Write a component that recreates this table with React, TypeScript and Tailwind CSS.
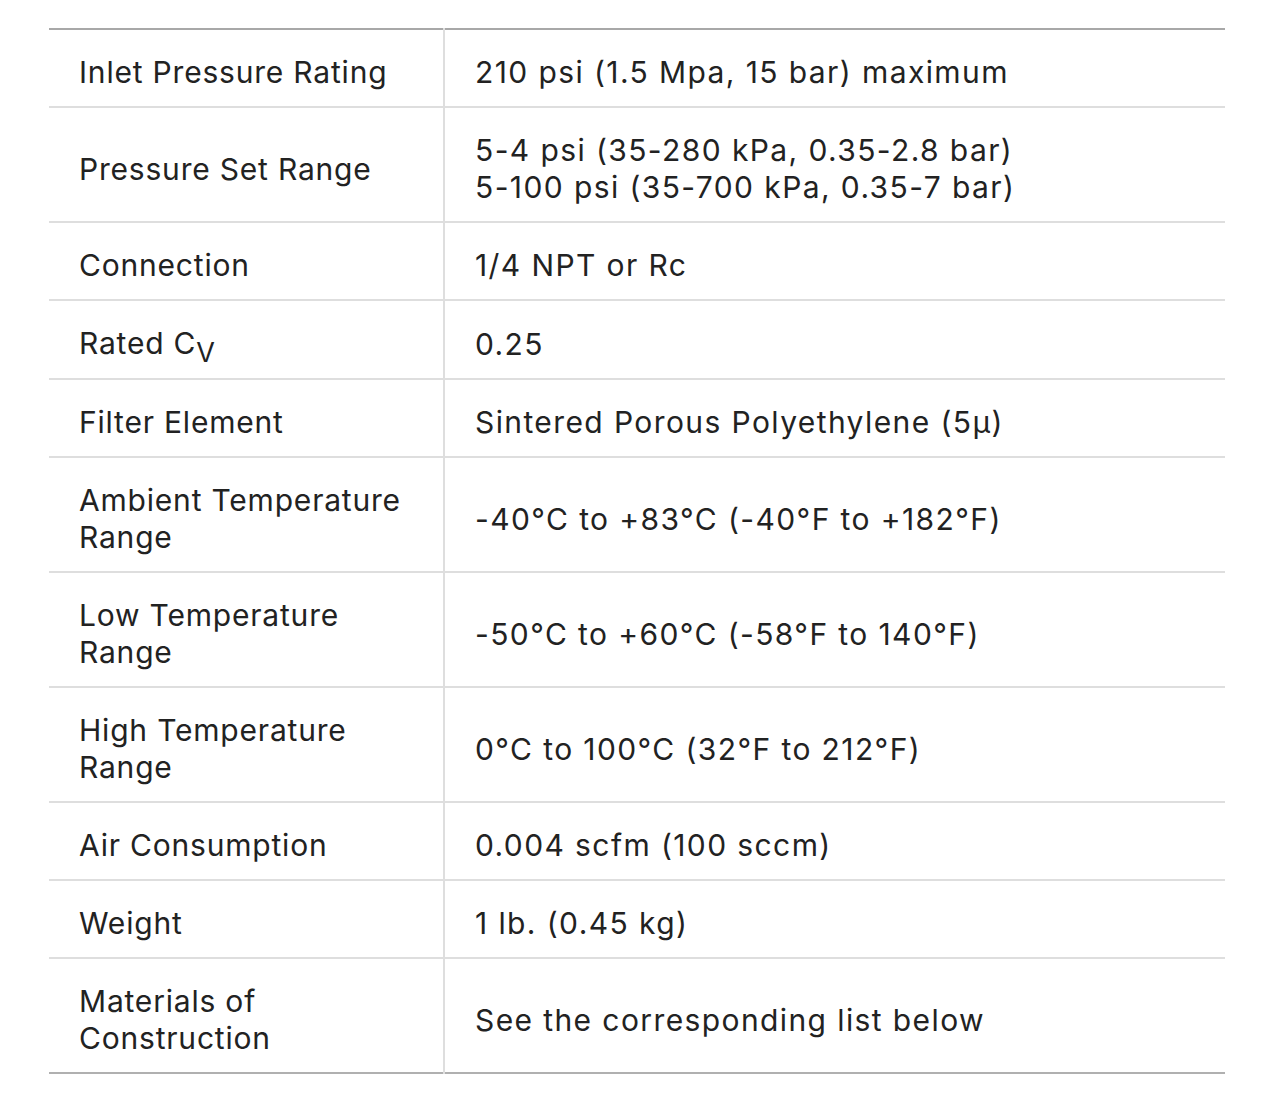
import React from "react";

const rows: { label: React.ReactNode; value: React.ReactNode }[] = [
  { label: "Inlet Pressure Rating", value: "210 psi (1.5 Mpa, 15 bar) maximum" },
  {
    label: "Pressure Set Range",
    value: (
      <>
        5-4 psi (35-280 kPa, 0.35-2.8 bar)
        <br />
        5-100 psi (35-700 kPa, 0.35-7 bar)
      </>
    ),
  },
  { label: "Connection", value: "1/4 NPT or Rc" },
  {
    label: (
      <>
        Rated C<span className="relative top-[8px] text-[27px]">V</span>
      </>
    ),
    value: "0.25",
  },
  { label: "Filter Element", value: "Sintered Porous Polyethylene (5µ)" },
  {
    label: (
      <>
        Ambient Temperature
        <br />
        Range
      </>
    ),
    value: "-40°C to +83°C (-40°F to +182°F)",
  },
  {
    label: (
      <>
        Low Temperature
        <br />
        Range
      </>
    ),
    value: "-50°C to +60°C (-58°F to 140°F)",
  },
  {
    label: (
      <>
        High Temperature
        <br />
        Range
      </>
    ),
    value: "0°C to 100°C (32°F to 212°F)",
  },
  { label: "Air Consumption", value: "0.004 scfm (100 sccm)" },
  { label: "Weight", value: "1 lb. (0.45 kg)" },
  {
    label: (
      <>
        Materials of
        <br />
        Construction
      </>
    ),
    value: "See the corresponding list below",
  },
];

export default function App() {
  return (
    <div className="min-h-[1109px] w-[1270px] bg-white pt-[28px] pl-[49px]">
      <table
        className="w-[1176px] border-collapse text-[#222222] text-[30px] leading-[37px]"
        style={{ fontFamily: "Inter, 'Open Sans', sans-serif" }}
      >
        <tbody>
          {rows.map((r, i) => (
            <tr
              key={i}
              className={
                (i === 0 ? "border-t-2 border-t-[#a8a8a8] " : "") +
                (i === rows.length - 1
                  ? "border-b-2 border-b-[#b0b0b0]"
                  : "border-b-2 border-b-[#dedede]")
              }
            >
              <td className="w-[395px] border-r-2 border-r-[#dedede] pl-[30px] pr-2 pt-[24px] pb-[15px] align-middle tracking-[0.8px]">
                {r.label}
              </td>
              <td className="pl-[30px] pr-2 pt-[24px] pb-[15px] align-middle tracking-[1.4px]">
                {r.value}
              </td>
            </tr>
          ))}
        </tbody>
      </table>
    </div>
  );
}
